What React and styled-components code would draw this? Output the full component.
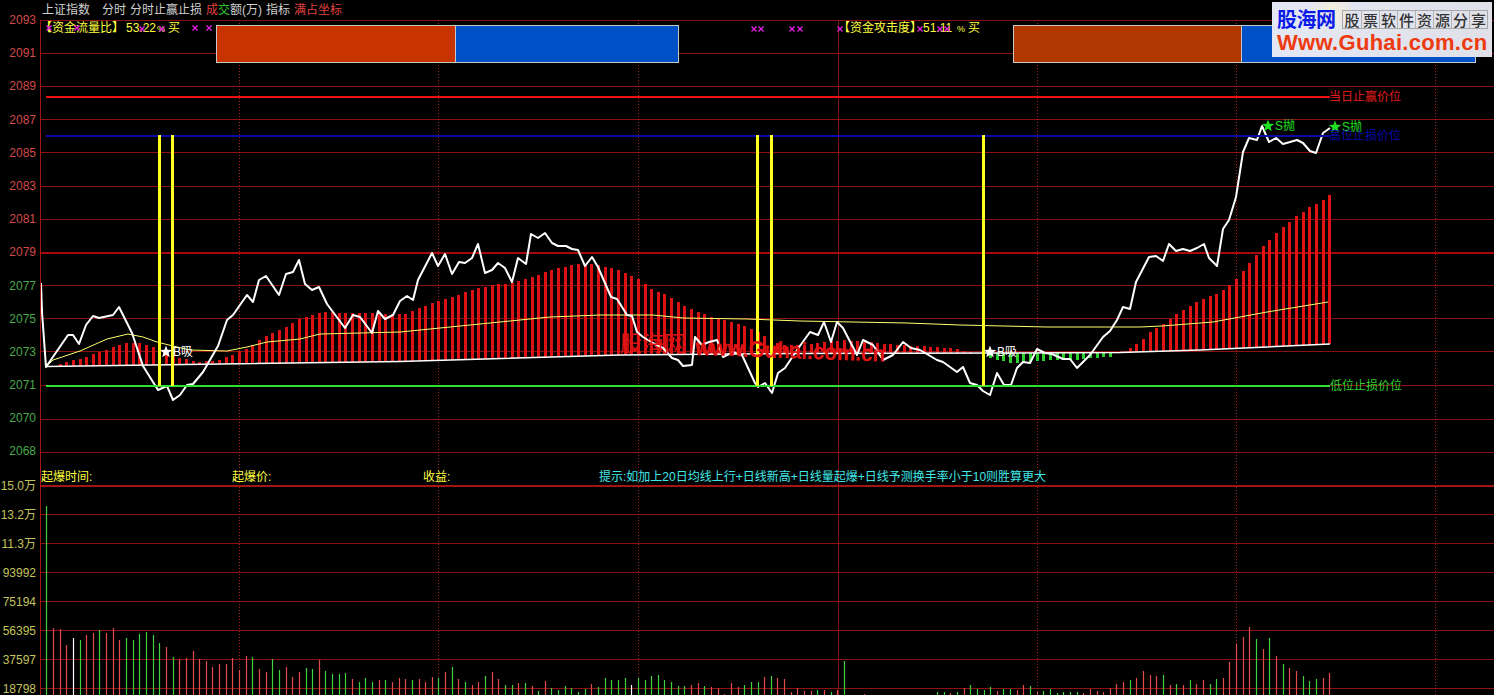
import React from "react";
import styled, { createGlobalStyle } from "styled-components";

const FONT = `"Liberation Sans", "Noto Sans CJK SC", sans-serif`;

const priceLine = [[41,283],[42,312],[46,367],[68,335],[73,335],[79,344],[86,325],[93,316],[99,318],[113,315],[119,307],[132,333],[143,366],[158,390],[167,386],[173,400],[180,395],[187,385],[193,384],[203,372],[218,346],[227,320],[233,315],[247,295],[253,302],[259,280],[266,276],[279,295],[286,274],[293,272],[299,260],[305,284],[312,290],[319,287],[327,304],[345,328],[353,315],[360,317],[372,333],[378,311],[385,319],[393,315],[400,301],[407,296],[413,300],[418,280],[432,253],[438,266],[445,254],[452,274],[459,262],[465,263],[472,258],[478,244],[485,273],[492,270],[498,263],[505,268],[512,282],[518,258],[526,264],[531,234],[538,238],[545,233],[552,243],[558,246],[566,246],[572,249],[578,250],[585,266],[592,257],[598,267],[611,297],[617,299],[627,315],[632,316],[637,332],[643,337],[653,343],[663,348],[672,358],[678,360],[683,366],[692,365],[695,337],[702,345],[709,342],[717,340],[723,357],[733,352],[742,355],[755,383],[758,387],[765,383],[772,393],[778,373],[785,368],[797,350],[810,332],[818,335],[824,322],[831,342],[837,322],[843,328],[857,355],[863,340],[873,345],[883,360],[893,355],[903,342],[911,348],[920,350],[937,360],[943,362],[957,372],[963,367],[970,383],[977,385],[983,391],[990,395],[997,373],[1004,385],[1011,385],[1017,368],[1023,362],[1030,363],[1037,349],[1045,353],[1052,354],[1063,359],[1070,359],[1077,368],[1090,355],[1103,337],[1110,331],[1117,320],[1123,307],[1130,309],[1136,282],[1149,257],[1156,256],[1163,261],[1169,244],[1176,251],[1183,249],[1190,251],[1197,248],[1204,244],[1209,258],[1217,266],[1223,229],[1229,220],[1236,197],[1243,152],[1249,138],[1257,140],[1262,126],[1269,142],[1276,138],[1283,144],[1297,140],[1303,143],[1310,151],[1316,153],[1323,133],[1330,128]];

const averageLine = [[46,367],[53,360],[80,351],[107,339],[128,334],[143,337],[157,342],[173,346],[190,350],[227,351],[247,347],[267,342],[300,339],[320,334],[400,332],[450,327],[500,322],[550,317],[600,315],[653,315],[683,318],[747,319],[800,321],[907,323],[960,325],[1047,327],[1140,327],[1162,326],[1213,322],[1267,312],[1328,302]];

const baseLine = [[46,366.5],[400,361.5],[620,355],[800,353.5],[1000,353],[1120,352.5],[1200,350],[1330,344]];

const redTops = [[59,364],[66,362],[73,360],[79,359],[86,357],[93,354],[99,352],[106,350],[113,347],[119,345],[126,343],[139,343],[146,345],[153,347],[166,355],[180,358],[192,361],[199,362],[219,360],[226,357],[232,355],[239,351],[246,349],[252,345],[259,340],[266,336],[272,333],[279,330],[286,327],[292,323],[299,319],[305,317],[312,315],[325,312],[345,313],[404,314],[433,303],[452,297],[472,290],[492,285],[512,283],[532,277],[545,272],[558,268],[578,264],[592,264],[605,267],[618,270],[638,279],[652,290],[665,294],[678,302],[692,310],[712,317],[732,322],[752,329],[765,336],[780,345],[800,345],[843,340],[867,342],[900,345],[933,347],[957,349],[973,353]];

const riseTops = [[1123,352],[1130,348],[1137,344],[1143,339],[1149,333],[1156,328],[1163,324],[1169,319],[1177,314],[1183,310],[1190,306],[1197,302],[1203,299],[1209,296],[1216,294],[1223,290],[1229,285],[1236,279],[1243,271],[1249,263],[1256,255],[1263,246],[1269,240],[1276,233],[1283,227],[1289,222],[1296,216],[1303,212],[1309,207],[1316,204],[1323,200],[1329,195]];

const greenBottoms = [[990,358],[1010,363],[1023,363],[1050,360],[1076,360],[1103,357]];

// volume bars, one per minute: [top y, colour]
const volumes = [
  [506,"g"],[628,"r"],[629,"r"],[645,"r"],[638,"w"],[640,"g"],[635,"r"],[633,"r"],[630,"g"],[633,"r"],[628,"r"],[640,"r"],[638,"g"],[640,"g"],[634,"g"],[632,"g"],[635,"g"],[643,"g"],[647,"r"],[657,"g"],[659,"r"],[658,"r"],[651,"r"],[659,"r"],[661,"r"],[667,"r"],[664,"r"],[664,"r"],[658,"r"],[670,"r"],[656,"r"],[657,"g"],[669,"r"],[672,"r"],[659,"g"],[670,"g"],[667,"r"],[677,"r"],[672,"r"],[668,"g"],[669,"g"],[660,"r"],[671,"g"],[674,"g"],[674,"g"],[673,"g"],[679,"r"],[682,"g"],[678,"g"],[682,"g"],[680,"r"],[680,"g"],[682,"r"],[678,"r"],
  [679,"r"],[680,"g"],[679,"r"],[682,"r"],[677,"r"],[678,"g"],[672,"r"],[667,"g"],[679,"r"],[682,"g"],[685,"r"],[682,"r"],[676,"g"],[672,"r"],[679,"r"],[685,"g"],[685,"g"],[683,"r"],[683,"g"],[686,"r"],[691,"g"],[681,"r"],[688,"g"],[690,"g"],[686,"g"],[688,"g"],[692,"g"],[689,"g"],[684,"r"],[687,"g"],[678,"g"],[680,"g"],[680,"g"],[678,"g"],[685,"w"],[678,"g"],[680,"g"],[676,"g"],[675,"g"],[680,"g"],[682,"g"],[686,"g"],[686,"g"],[685,"r"],[683,"r"],[686,"g"],[687,"r"],[688,"r"],[694,"r"],[683,"r"],[687,"r"],[685,"g"],[682,"g"],[682,"g"],[677,"r"],[676,"g"],[678,"r"],[679,"r"],[692,"r"],[688,"r"],[691,"r"],[691,"r"],[690,"g"],[690,"r"],[692,"g"],[690,"r"],[661,"g"],
  [695,"r"],[695,"g"],[694,"r"],[695,"g"],[695,"r"],[695,"r"],[695,"g"],[695,"g"],[695,"r"],[695,"g"],[695,"r"],[695,"g"],[695,"g"],[692,"g"],[692,"g"],[693,"r"],[692,"g"],[688,"r"],[685,"g"],[689,"g"],[690,"g"],[687,"g"],[691,"r"],[689,"g"],[689,"g"],[690,"r"],[685,"r"],[686,"g"],[692,"r"],[691,"g"],[689,"g"],[693,"g"],[692,"g"],[692,"g"],[692,"g"],[693,"r"],
  [689,"r"],[691,"r"],[692,"r"],[688,"r"],[684,"r"],[682,"r"],[680,"g"],[678,"r"],[671,"r"],[675,"r"],[676,"r"],[675,"g"],[685,"r"],[684,"g"],[685,"r"],[680,"g"],[684,"r"],[680,"r"],[684,"g"],[679,"g"],[678,"r"],[662,"r"],[644,"r"],[637,"r"],[627,"r"],[639,"g"],[649,"r"],[638,"g"],[656,"r"],[664,"g"],[668,"r"],[671,"r"],[676,"g"],[681,"g"],[679,"g"],[678,"r"],[673,"r"],
];

const VOLUME_COLORS = { r: "#e34c4c", g: "#3fd03f", w: "#ffffff" };
const MINUTE = 6.647;
const minuteX = (i) => 46.3 + i * MINUTE;

const interp = (pts, x) => {
  if (x <= pts[0][0]) return pts[0][1];
  for (let i = 1; i < pts.length; i++) {
    if (x <= pts[i][0]) {
      const [x0, y0] = pts[i - 1];
      const [x1, y1] = pts[i];
      return y0 + ((y1 - y0) * (x - x0)) / (x1 - x0);
    }
  }
  return pts[pts.length - 1][1];
};

const toPoints = (pts) => pts.map((p) => p.join(",")).join(" ");

const starPoints = (cx, cy, r) => {
  const out = [];
  for (let i = 0; i < 10; i++) {
    const rad = i % 2 ? r * 0.42 : r;
    const a = -Math.PI / 2 + (i * Math.PI) / 5;
    out.push(`${(cx + rad * Math.cos(a)).toFixed(1)},${(cy + rad * Math.sin(a)).toFixed(1)}`);
  }
  return out.join(" ");
};

const GlobalStyle = createGlobalStyle`
  html, body {
    margin: 0;
    padding: 0;
    background: #000;
  }
`;

const Page = styled.div`
  position: relative;
  width: 1494px;
  height: 695px;
  overflow: hidden;
  background: #000;
  font-family: ${FONT};
  font-size: 12px;
`;

const TitleBar = styled.div`
  display: flex;
  align-items: center;
  gap: 4px;
  height: 20px;
  padding-left: 42px;
  box-sizing: border-box;
`;

const TitleItem = styled.span`
  color: ${(p) => p.$color || "#d0d0d0"};
  margin-right: ${(p) => p.$after || 0}px;
  white-space: nowrap;
  line-height: 18px;
`;

const Panel = styled.section`
  display: flex;
  height: ${(p) => p.$height}px;
`;

const Axis = styled.div`
  flex: none;
  width: 40px;
  border-right: 1px solid #a51515;
  display: flex;
  flex-direction: column;
`;

const AxisLabels = styled.div`
  margin-top: ${(p) => p.$offset}px;
  display: flex;
  flex-direction: column;
`;

const AxisLabel = styled.div`
  height: ${(p) => p.$step}px;
  line-height: 16px;
  padding-right: 4px;
  text-align: right;
  color: ${(p) => p.$color};
  white-space: nowrap;
`;

const Plot = styled.div`
  position: relative;
  flex: 1;
  min-width: 0;
  border-top: ${(p) => (p.$rule ? "2px solid #a31414" : "none")};
`;

const ChartSvg = styled.svg`
  display: block;
  width: 100%;
  height: 100%;
`;

const GridLine = styled.line`
  stroke: ${(p) => (p.$strong ? "#a80808" : "#8c1212")};
  stroke-width: ${(p) => (p.$strong ? 2 : 1)};
  shape-rendering: crispEdges;
`;

const TimeLine = styled.line`
  stroke: ${(p) => (p.$solid ? "#7d1515" : "#a82020")};
  stroke-width: 1;
  stroke-dasharray: ${(p) => (p.$solid ? "none" : "1 2")};
  shape-rendering: crispEdges;
`;

const Bar = styled.rect`
  fill: ${(p) => p.$color};
  shape-rendering: crispEdges;
`;

const Curve = styled.polyline`
  fill: none;
  stroke: ${(p) => p.$color};
  stroke-width: ${(p) => p.$width};
  stroke-linejoin: round;
`;

const LevelLine = styled.line`
  stroke: ${(p) => p.$color};
  stroke-width: 2;
  shape-rendering: crispEdges;
`;

const SignalLine = styled.line`
  stroke: #ffff20;
  stroke-width: 3;
  shape-rendering: crispEdges;
`;

const VolumeTick = styled.line`
  stroke: ${(p) => p.$color};
  stroke-width: 1.2;
`;

const ChartText = styled.text`
  fill: ${(p) => p.$color};
  font-family: ${FONT};
  font-size: ${(p) => p.$size || 12}px;
  font-weight: ${(p) => p.$weight || 400};
`;

const Mark = styled.path`
  stroke: #e020e0;
  stroke-width: 1.4;
  fill: none;
`;

const StarShape = styled.polygon`
  fill: ${(p) => p.$color};
`;

const RatioBar = styled.div`
  position: absolute;
  top: 5px;
  left: ${(p) => p.$left}px;
  width: 463px;
  height: 38px;
  box-sizing: border-box;
  display: flex;
  border: 1px solid #c8c8c8;
`;

const RatioPart = styled.div`
  flex: ${(p) => (p.$width ? `0 0 ${p.$width}px` : "1")};
  background: ${(p) => p.$color};
  border-left: ${(p) => (p.$divide ? "1px solid #c8c8c8" : "none")};
`;

const InfoRow = styled.div`
  position: absolute;
  left: 0;
  right: 0;
  bottom: 0;
  height: 16px;
  display: grid;
  grid-template-columns: 191px 191px 176px 1fr;
  line-height: 16px;
`;

const InfoItem = styled.span`
  color: ${(p) => p.$color || "#ffff40"};
  white-space: nowrap;
`;

const Logo = styled.div`
  position: absolute;
  top: 2px;
  left: 1272px;
  width: 220px;
  height: 55px;
  box-sizing: border-box;
  padding: 5px 4px 0 5px;
  display: flex;
  flex-direction: column;
  gap: 1px;
  background:
    radial-gradient(circle at 60px 10px, #f4eed8 0, rgba(244, 238, 216, 0) 22px),
    linear-gradient(90deg, #e4e8f4, #dfe0e8);
`;

const LogoTop = styled.div`
  display: flex;
  align-items: center;
  justify-content: space-between;
`;

const LogoName = styled.span`
  color: #0a1ae8;
  font-size: 20px;
  font-weight: 700;
  line-height: 24px;
  letter-spacing: -0.5px;
  font-family: "Noto Sans CJK SC", sans-serif;
`;

const LogoCells = styled.div`
  display: flex;
  border: 1px solid #a8a8a8;
`;

const LogoCell = styled.span`
  width: 18px;
  height: 17px;
  line-height: 17px;
  text-align: center;
  color: #333;
  font-size: 15px;
  font-weight: 500;
  border-left: 1px solid #b4b4b4;
  box-sizing: border-box;
  font-family: "Noto Sans CJK SC", sans-serif;
  &:first-child {
    border-left: none;
  }
`;

const LogoUrl = styled.div`
  color: #ee3a10;
  font-size: 22px;
  font-weight: 700;
  line-height: 22px;
  letter-spacing: 0.3px;
  white-space: nowrap;
`;

const topLabels = ["2093", "2091", "2089", "2087", "2085", "2083", "2081", "2079", "2077", "2075", "2073", "2071", "2070", "2068"];
const bottomLabels = ["15.0万", "13.2万", "11.3万", "93992", "75194", "56395", "37597", "18798"];
const gridY = [20.5, 53.5, 86.5, 119.5, 152.5, 186.5, 219.5, 252.5, 285.5, 318.5, 351.5, 385.5, 419.5, 452.5];
const volumeY = [514.5, 543.5, 572.5, 601.5, 630.5, 659.5, 688.5];
const timeX = [239.5, 438.5, 638.5, 838.5, 1037.5, 1236.5, 1435.5];
const signalX = [159.5, 172.5, 757.5, 771.5, 983.5];
const markPoints = [[49, 28], [77, 28], [142, 29], [162, 29], [195, 28], [209, 28], [754, 29], [761, 29], [792, 29], [800, 29], [840, 29], [920, 29], [940, 29], [947, 29]];
const logoChars = ["股", "票", "软", "件", "资", "源", "分", "享"];

const minutes = Array.from({ length: 194 }, (_, i) => i);

function PriceBars() {
  return minutes.map((i) => {
    const x = minuteX(i);
    const base = interp(baseLine, x);
    if (x > 56 && x < 976) {
      const top = interp(redTops, x);
      return <Bar key={i} $color="#dc1212" x={Math.round(x) - 1} y={top} width={3} height={Math.max(base - top, 1)} />;
    }
    if (x > 1119) {
      const top = interp(riseTops, x);
      return <Bar key={i} $color="#e01212" x={Math.round(x) - 1} y={top} width={3} height={base - top} />;
    }
    if (x > 986 && x < 1110) {
      const bottom = interp(greenBottoms, x);
      return <Bar key={i} $color="#2ed02e" x={Math.round(x) - 1} y={base} width={3} height={bottom - base} />;
    }
    return null;
  });
}

function Signal({ x, y, color, label }) {
  return (
    <>
      <StarShape $color={color} points={starPoints(x, y, 6.5)} />
      <ChartText $color={color} x={x + 7} y={y + 4}>{label}</ChartText>
    </>
  );
}

function PriceChart() {
  return (
    <ChartSvg viewBox="41 20 1453 465" preserveAspectRatio="none">
      {gridY.map((y) => (
        <GridLine key={y} $strong={y === 252.5} x1="41" x2="1494" y1={y} y2={y} />
      ))}
      {timeX.map((x) => (
        <TimeLine key={x} $solid={x === 838.5} x1={x} x2={x} y1="20" y2="485" />
      ))}
      <PriceBars />
      <Curve $color="#ffff70" $width="1" points={toPoints(averageLine)} />
      <Curve $color="#ffffff" $width="1.5" points={toPoints(baseLine)} />
      <Curve $color="#ffffff" $width="2" points={toPoints(priceLine)} />
      <LevelLine $color="#ee1010" x1="46" x2="1330" y1="96.5" y2="96.5" />
      <LevelLine $color="#0a0aa8" x1="46" x2="1330" y1="135.5" y2="135.5" />
      <LevelLine $color="#30e030" x1="46" x2="1330" y1="385.5" y2="385.5" />
      {signalX.map((x) => (
        <SignalLine key={x} x1={x} x2={x} y1="135" y2="386" />
      ))}
      <ChartText $color="#e01414" $size="22" x="620" y="351">股海网</ChartText>
      <ChartText $color="#e01414" $size="23" $weight="700" x="695" y="355" textLength="190" lengthAdjust="spacingAndGlyphs" transform="rotate(2 695 355)">www.Guhai.com.cn</ChartText>
      <Signal x={166} y={352} color="#ffffff" label="B吸" />
      <Signal x={990} y={352} color="#ffffff" label="B吸" />
      <Signal x={1268} y={126} color="#20e020" label="S抛" />
      <Signal x={1335} y={127} color="#20e020" label="S抛" />
      <ChartText $color="#e01c1c" x="1329" y="101">当日止赢价位</ChartText>
      <ChartText $color="#0a0ab0" x="1329" y="140">高位止损价位</ChartText>
      <ChartText $color="#30d030" x="1330" y="390">低位止损价位</ChartText>
      <ChartText $color="#ffff40" x="40" y="32">【资金流量比】</ChartText>
      <ChartText $color="#ffff40" x="126" y="32">53.22</ChartText>
      <ChartText $color="#ffff40" $size="9" x="157" y="32">%</ChartText>
      <ChartText $color="#ffff40" x="168" y="32">买</ChartText>
      <ChartText $color="#ffff40" x="838" y="32">【资金攻击度】</ChartText>
      <ChartText $color="#ffff40" x="923" y="32">51.11</ChartText>
      <ChartText $color="#ffff40" $size="9" x="957" y="32">%</ChartText>
      <ChartText $color="#ffff40" x="968" y="32">买</ChartText>
      {markPoints.map(([x, y]) => (
        <Mark key={x} d={`M${x - 2.5} ${y - 2.5}L${x + 2.5} ${y + 2.5}M${x + 2.5} ${y - 2.5}L${x - 2.5} ${y + 2.5}`} />
      ))}
    </ChartSvg>
  );
}

function VolumeChart() {
  return (
    <ChartSvg viewBox="41 487 1453 208" preserveAspectRatio="none">
      {volumeY.map((y) => (
        <GridLine key={y} x1="41" x2="1494" y1={y} y2={y} />
      ))}
      {timeX.map((x) => (
        <TimeLine key={x} $solid={x === 838.5} x1={x} x2={x} y1="487" y2="695" />
      ))}
      {volumes.map(([y, c], i) => (
        <VolumeTick key={i} $color={VOLUME_COLORS[c]} x1={Math.round(minuteX(i)) + 0.5} x2={Math.round(minuteX(i)) + 0.5} y1={y} y2="695" />
      ))}
    </ChartSvg>
  );
}

export default function App() {
  return (
    <Page>
      <GlobalStyle />
      <TitleBar>
        <TitleItem $after="8">上证指数</TitleItem>
        <TitleItem>分时</TitleItem>
        <TitleItem>分时止赢止损</TitleItem>
        <TitleItem>
          <InfoItem $color="#e04040">成</InfoItem>
          <InfoItem $color="#30c030">交</InfoItem>额(万)
        </TitleItem>
        <TitleItem>指标</TitleItem>
        <TitleItem $color="#e04040">满占坐标</TitleItem>
      </TitleBar>
      <Panel $height={465}>
        <Axis>
          <AxisLabels $offset={-8}>
            {topLabels.map((t, i) => (
              <AxisLabel key={t} $step={33.2} $color={i < 8 ? "#d24a4a" : "#4aa84a"}>{t}</AxisLabel>
            ))}
          </AxisLabels>
        </Axis>
        <Plot>
          <PriceChart />
          <RatioBar $left={175}>
            <RatioPart $width={238} $color="#c83400" />
            <RatioPart $divide $color="#0050c8" />
          </RatioBar>
          <RatioBar $left={972}>
            <RatioPart $width={227} $color="#b03800" />
            <RatioPart $divide $color="#0050c8" />
          </RatioBar>
          <InfoRow>
            <InfoItem>起爆时间:</InfoItem>
            <InfoItem>起爆价:</InfoItem>
            <InfoItem>收益:</InfoItem>
            <InfoItem $color="#40e8e8">提示:如加上20日均线上行+日线新高+日线量起爆+日线予测换手率小于10则胜算更大</InfoItem>
          </InfoRow>
        </Plot>
      </Panel>
      <Panel $height={210}>
        <Axis>
          <AxisLabels $offset={-7}>
            {bottomLabels.map((t) => (
              <AxisLabel key={t} $step={29} $color="#c4c45c">{t}</AxisLabel>
            ))}
          </AxisLabels>
        </Axis>
        <Plot $rule>
          <VolumeChart />
        </Plot>
      </Panel>
      <Logo>
        <LogoTop>
          <LogoName>股海网</LogoName>
          <LogoCells>
            {logoChars.map((c) => (
              <LogoCell key={c}>{c}</LogoCell>
            ))}
          </LogoCells>
        </LogoTop>
        <LogoUrl>Www.Guhai.com.cn</LogoUrl>
      </Logo>
    </Page>
  );
}
